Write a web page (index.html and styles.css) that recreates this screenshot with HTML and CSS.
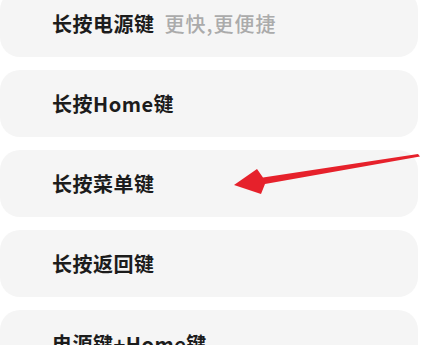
FILE: index.html
```html
<!DOCTYPE html>
<html lang="zh-CN">
<head>
    <meta charset="UTF-8">
    <meta name="viewport" content="width=device-width, initial-scale=1.0">
    <title>快捷方式</title>
    <link rel="stylesheet" href="styles.css">
</head>
<body>
    <div class="page">
        <div class="list">
            <div class="item">长按电源键<span class="hint">更快,更便捷</span></div>
            <div class="item">长按Home键</div>
            <div class="item">长按菜单键</div>
            <div class="item">长按返回键</div>
            <div class="item">电源键+Home键</div>
        </div>
        <svg class="arrow" width="428" height="345" viewBox="0 0 428 345">
            <polygon points="234,185 257,169 263,177.5 418,154 420,156.5 265,184 261,194" fill="#e6212b"/>
        </svg>
    </div>
</body>
</html>
```

FILE: styles.css
```css
body {
    margin: 0;
    background-color: #ffffff;
    font-family: "Noto Sans CJK SC", "Noto Sans", sans-serif;
    overflow: hidden;
}

.page {
    position: relative;
    width: 428px;
    height: 345px;
    overflow: hidden;
}

.list {
    display: flex;
    flex-direction: column;
    gap: 13px;
    margin-top: -10px;
    padding-right: 10px;
}

.item {
    height: 67px;
    display: flex;
    align-items: center;
    padding-left: 52px;
    background-color: #f5f5f5;
    border-radius: 20px;
    font-size: 20px;
    letter-spacing: 0.5px;
    font-weight: bold;
    color: #1c1c1c;
}

.hint {
    margin-left: 10px;
    font-size: 20px;
    letter-spacing: 1px;
    font-weight: 500;
    color: #ababab;
}

.arrow {
    position: absolute;
    left: 0;
    top: 0;
}
```
